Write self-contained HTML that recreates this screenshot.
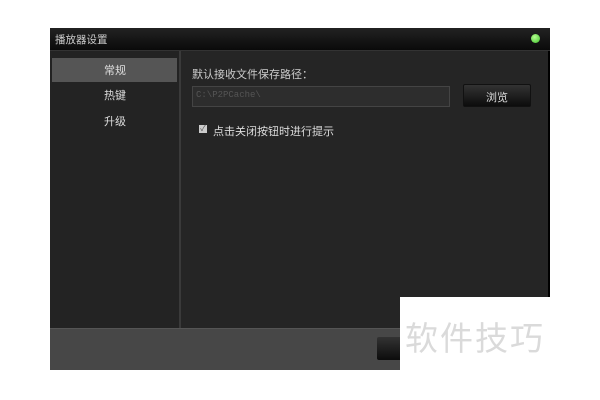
<!DOCTYPE html>
<html><head><meta charset="utf-8"><style>
body{margin:0;width:600px;height:400px;background:#fff;position:relative;overflow:hidden;font-family:"Liberation Sans","Noto Sans CJK SC",sans-serif}
div{position:absolute;box-sizing:border-box}
.t{font-size:11px;color:#ddd;white-space:nowrap}
</style></head><body>
<div style="left:50px;top:28px;width:500px;height:342px;background:#252525;border-right:2px solid #000"></div>
<div style="left:50px;top:28px;width:500px;height:23px;background:linear-gradient(#222,#0a0a0a);border-bottom:1px solid #333"></div>
<div class="t" style="left:55px;top:32px;color:#ccc;font-size:10.5px">播放器设置</div>
<div style="left:531px;top:34px;width:9px;height:9px;border-radius:50%;background:radial-gradient(circle at 40% 35%,#b5ff90,#3cc02a)"></div>
<div style="left:50px;top:51px;width:129px;height:277px;background:#232323"></div>
<div style="left:179px;top:51px;width:2px;height:277px;background:#3a3a3a"></div>
<div style="left:52px;top:58px;width:125px;height:24px;background:#555"></div>
<div class="t" style="left:104px;top:62px">常规</div>
<div class="t" style="left:104px;top:87px">热键</div>
<div class="t" style="left:104px;top:113px">升级</div>
<div class="t" style="left:192px;top:66px;color:#ccc">默认接收文件保存路径：</div>
<div style="left:192px;top:86px;width:258px;height:21px;background:#2d2d2d;border:1px solid #444"></div>
<div style="left:196px;top:90px;font-size:9px;color:#555;font-family:'Liberation Mono',monospace">C:\P2PCache\</div>
<div style="left:463px;top:84px;width:68px;height:23px;background:linear-gradient(#333,#0c0c0c);border:1px solid #111;border-radius:2px"></div>
<div class="t" style="left:486px;top:89px">浏览</div>
<div style="left:199px;top:125px;width:8px;height:8px;background:#ccc;font-size:8px;line-height:8px;color:#555;text-align:center">✓</div>
<div class="t" style="left:213px;top:123px">点击关闭按钮时进行提示</div>
<div style="left:50px;top:328px;width:498px;height:42px;background:#474747;border-top:1px solid #555"></div>
<div style="left:377px;top:337px;width:30px;height:23px;background:linear-gradient(#333,#0c0c0c);border-radius:2px"></div>
<div style="left:400px;top:297px;width:200px;height:103px;background:#fff"></div>
<div style="left:405px;top:312px;font-size:33px;color:#dadada;font-family:'Noto Sans CJK SC',sans-serif;letter-spacing:2px">软件技巧</div>
</body></html>
